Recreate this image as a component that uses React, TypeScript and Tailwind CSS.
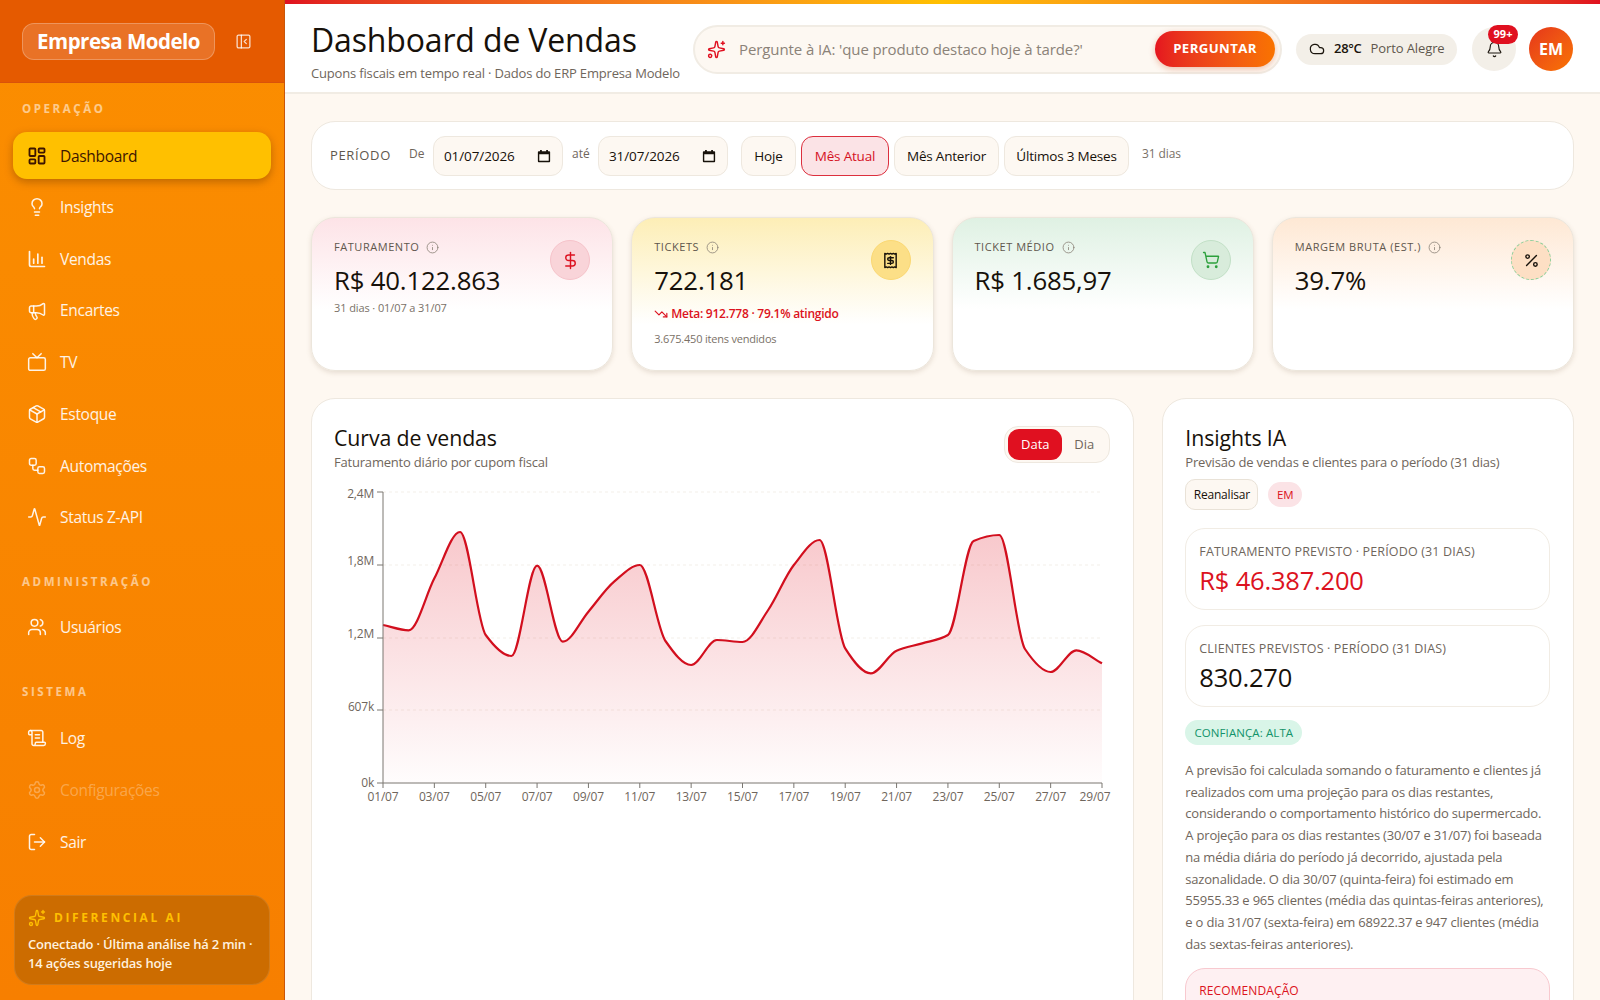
import React from "react";
import {
  LayoutDashboard, Lightbulb, Megaphone, Tv, Package, Workflow, Activity, Users, ScrollText, Settings, LogOut,
  Sparkles, PanelLeftClose, Cloud, Bell, DollarSign, Receipt, ShoppingCart, Percent, Info, TrendingDown,
} from "lucide-react";

const font = { fontFamily: '"Open Sans", "Noto Sans", sans-serif' };

function VendasIcon({ className }: { className?: string }) {
  return (
    <svg viewBox="0 0 24 24" fill="none" stroke="currentColor" strokeWidth="2" strokeLinecap="round" strokeLinejoin="round" className={className}>
      <path d="M3 3v16a2 2 0 0 0 2 2h16" />
      <path d="M8 17v-5" />
      <path d="M13 17V6" />
      <path d="M18 17v-7" />
    </svg>
  );
}

function NavItem({ icon: Icon, label, active, muted }: { icon: any; label: string; active?: boolean; muted?: boolean }) {
  return (
    <div
      className={
        "flex h-[47px] items-center gap-[13px] rounded-[14px] px-[14px] text-[15.5px] tracking-[-0.3px] " +
        (active
          ? "bg-[#ffc000] font-medium text-[#3d1500] shadow-[0_3px_8px_rgba(100,50,0,0.4)]"
          : muted
          ? "font-medium text-white/30"
          : "font-medium text-white/90")
      }
    >
      <Icon className="h-5 w-5 shrink-0" strokeWidth={active ? 2.2 : 1.8} />
      <span className={active ? "pt-[2px]" : "pt-[1px]"}>{label}</span>
    </div>
  );
}

function SectionLabel({ children, className }: { children: React.ReactNode; className?: string }) {
  return (
    <div className={"h-4 pl-[9px] text-[11.5px] leading-4 font-bold tracking-[2.6px] text-white/55 " + (className || "")}>{children}</div>
  );
}

function Sidebar() {
  return (
    <aside className="flex h-full w-[285px] shrink-0 flex-col border-r border-[#c9560a] bg-linear-to-b from-[#fb8e00] to-[#f77f00]">
      <div className="flex h-[83px] shrink-0 items-center border-b border-[#d9530a] bg-[#e55a00] pr-[32px] pl-[22px]">
        <div className="flex h-[37px] w-[193px] items-center justify-center rounded-[12px] border border-white/25 bg-white/15 text-[20.5px] font-bold tracking-[-0.5px] text-white">
          Empresa Modelo
        </div>
        <PanelLeftClose className="ml-auto h-[17px] w-[17px] text-white/80" strokeWidth={1.8} />
      </div>
      <nav className="flex flex-1 flex-col px-[13px] pt-[18px]">
        <SectionLabel className="mb-[15px]">OPERAÇÃO</SectionLabel>
        <div className="flex flex-col gap-[4.7px]">
          <NavItem icon={LayoutDashboard} label="Dashboard" active />
          <NavItem icon={Lightbulb} label="Insights" />
          <NavItem icon={VendasIcon} label="Vendas" />
          <NavItem icon={Megaphone} label="Encartes" />
          <NavItem icon={Tv} label="TV" />
          <NavItem icon={Package} label="Estoque" />
          <NavItem icon={Workflow} label="Automações" />
          <NavItem icon={Activity} label="Status Z-API" />
        </div>
        <SectionLabel className="mt-[33px] mb-[14px]">ADMINISTRAÇÃO</SectionLabel>
        <NavItem icon={Users} label="Usuários" />
        <SectionLabel className="mt-[33px] mb-[15px]">SISTEMA</SectionLabel>
        <div className="flex flex-col gap-[4.7px]">
          <NavItem icon={ScrollText} label="Log" />
          <NavItem icon={Settings} label="Configurações" muted />
          <NavItem icon={LogOut} label="Sair" />
        </div>
      </nav>
      <div className="mx-[14px] mb-[15px] h-[90px] rounded-[18px] border border-white/10 bg-[#cc6c00] px-[13px] pt-[13px]">
        <div className="flex items-center gap-[8px]">
          <Sparkles className="h-[18px] w-[18px] text-[#ffc000]" strokeWidth={1.8} />
          <span className="text-[12px] font-bold tracking-[2.6px] text-[#ffc000]">DIFERENCIAL AI</span>
        </div>
        <p className="mt-[8px] text-[13px] leading-[19px] font-semibold tracking-[-0.2px] text-[#fff1df]">
          Conectado · Última análise há 2 min · 14 ações sugeridas hoje
        </p>
      </div>
    </aside>
  );
}

function Header() {
  return (
    <header className="flex h-[90px] shrink-0 items-center border-b-2 border-[#f1ece4] bg-white pt-[2px] pr-[27px] pl-[26px]">
      <div className="w-[382px] shrink-0 pt-[2px]">
        <h1 className="text-[32px] leading-[40px] font-normal tracking-[-0.15px] text-[#17110a]">Dashboard de Vendas</h1>
        <p className="mt-[5px] text-[13px] leading-[16px] tracking-[-0.17px] whitespace-nowrap text-[#6f665c]">Cupons fiscais em tempo real · Dados do ERP Empresa Modelo</p>
      </div>
      <div className="flex h-[49px] w-[589px] shrink-0 items-center rounded-full border-2 border-[#f1ece4] bg-[#fdf8f2] pr-[5px] pl-[12px]">
        <Sparkles className="h-[19px] w-[19px] text-[#e01020]" strokeWidth={1.8} />
        <span className="ml-[13px] text-[15px] tracking-[-0.1px] text-[#8b8278]">Pergunte à IA: 'que produto destaco hoje à tarde?'</span>
        <div className="ml-auto flex h-[36px] w-[120px] items-center justify-center rounded-full bg-linear-to-r from-[#e5141f] to-[#f97300] text-[13.2px] font-bold tracking-[0.4px] text-white shadow-[0_2px_6px_rgba(200,60,0,0.3)]">
          PERGUNTAR
        </div>
      </div>
      <div className="ml-[14px] flex h-[31px] w-[161px] shrink-0 items-center rounded-full bg-[#f3efe8] pl-[13px]">
        <Cloud className="h-[16px] w-[16px] text-[#1a140c]" strokeWidth={1.8} />
        <span className="ml-[9px] text-[13px] font-semibold tracking-[-0.3px] text-[#1a140c]">28°C</span>
        <span className="ml-[9px] text-[13px] tracking-[-0.1px] text-[#5f574d]">Porto Alegre</span>
      </div>
      <div className="relative ml-[15px] flex h-[44px] w-[44px] shrink-0 items-center justify-center rounded-full bg-[#f3efe8]">
        <Bell className="h-[17px] w-[17px] text-[#1a140c]" strokeWidth={1.6} />
        <span className="absolute -top-[2px] left-[16px] flex h-[19px] w-[30px] items-center justify-center rounded-full bg-[#e01020] text-[11px] font-bold text-white">99+</span>
      </div>
      <div className="ml-[13px] flex h-[44px] w-[44px] shrink-0 items-center justify-center rounded-full bg-linear-to-br from-[#e5341a] to-[#f97300] text-[16px] font-bold text-white">EM</div>
    </header>
  );
}

function CalIcon() {
  return (
    <svg viewBox="0 0 16 16" className="ml-auto h-[14px] w-[14px] text-[#17110a]" fill="currentColor">
      <path d="M3.5 1h2v1.5h5V1h2v1.5H14a1 1 0 0 1 1 1V14a1 1 0 0 1-1 1H2a1 1 0 0 1-1-1V3.5a1 1 0 0 1 1-1h1.5V1zM2.6 6v7.4h10.8V6H2.6z" />
    </svg>
  );
}

function DateBox({ value }: { value: string }) {
  return (
    <div className="flex h-[40px] w-[130px] shrink-0 items-center rounded-[12px] border border-[#eee8df] bg-[#fdf8f2] pr-[11px] pl-[10px] text-[13.5px] tracking-[-0.1px] text-[#17110a]">
      <span className="pt-[1px]">{value}</span>
      <CalIcon />
    </div>
  );
}

function Chip({ children, active, w }: { children: React.ReactNode; active?: boolean; w: string }) {
  return (
    <div
      className={
        "flex h-[40px] shrink-0 items-center justify-center rounded-[12px] border pt-[1px] text-[13.5px] tracking-[-0.2px] " + w + " " +
        (active ? "border-[#dc2f3e] bg-[#fbe3e6] text-[#d5121f]" : "border-[#eee8df] bg-[#fdf8f2] text-[#17110a]")
      }
    >
      {children}
    </div>
  );
}

function FilterBar() {
  return (
    <section className="flex h-[69px] items-center rounded-[24px] border border-[#eee8df] bg-white pl-[18px]">
      <span className="w-[79px] pt-[1px] text-[13px] font-medium tracking-[0.65px] text-[#5f574d]">PERÍODO</span>
      <span className="-mt-[3px] w-[24px] text-[12px] text-[#6f665c]">De</span>
      <DateBox value="01/07/2026" />
      <span className="-mt-[3px] ml-[9px] w-[26px] text-[12px] text-[#6f665c]">até</span>
      <DateBox value="31/07/2026" />
      <div className="ml-[13px] flex gap-[5px]">
        <Chip w="w-[55px]">Hoje</Chip>
        <Chip w="w-[88px]" active>Mês Atual</Chip>
        <Chip w="w-[105px]">Mês Anterior</Chip>
        <Chip w="w-[125px]">Últimos 3 Meses</Chip>
      </div>
      <span className="-mt-[3px] ml-[13px] text-[12px] tracking-[-0.1px] text-[#7a7167]">31 dias</span>
    </section>
  );
}

function Kpi({
  title, value, grad, circle, icon, children,
}: { title: string; value: string; grad: string; circle: string; icon: React.ReactNode; children?: React.ReactNode }) {
  return (
    <div className={"relative h-[154px] rounded-[24px] border border-[#ece6dc] px-[22px] pt-[20px] shadow-[0_2px_5px_rgba(120,100,70,0.18)] " + grad}>
      <div className="flex h-[18px] items-center gap-[7px]">
        <span className="text-[11px] font-medium tracking-[0.55px] text-[#5f574d]">{title}</span>
        <Info className="h-[13px] w-[13px] text-[#8b8278]" strokeWidth={1.5} />
      </div>
      <div className="mt-[7px] text-[25.8px] leading-[34px] tracking-[-0.2px] text-[#17110a]">{value}</div>
      {children}
      <div className={"absolute top-[22px] right-[22px] flex h-[40px] w-[40px] items-center justify-center rounded-full border " + circle}>{icon}</div>
    </div>
  );
}

function Kpis() {
  return (
    <section className="grid grid-cols-4 gap-[18px]">
      <Kpi
        title="FATURAMENTO" value="R$ 40.122.863"
        grad="bg-linear-to-b from-[#fde3e7] to-white to-60%"
        circle="border-[#f6c3ca] bg-[#f9d4d9]"
        icon={<DollarSign className="h-[19px] w-[19px] text-[#dc1220]" strokeWidth={1.8} />}
      >
        <div className="mt-[3px] text-[11px] tracking-[-0.1px] text-[#7a7167]">31 dias · 01/07 a 31/07</div>
      </Kpi>
      <Kpi
        title="TICKETS" value="722.181"
        grad="bg-linear-to-b from-[#fdeeb6] to-white to-70%"
        circle="border-[#fbd872] bg-[#fcdf87]"
        icon={<Receipt className="h-[17px] w-[17px] text-[#17110a]" strokeWidth={2} />}
      >
        <div className="mt-[8px] flex items-center gap-[3px] text-[12px] font-semibold tracking-[-0.25px] text-[#dc1220]">
          <TrendingDown className="h-[14px] w-[14px]" strokeWidth={2} />
          Meta: 912.778 · 79.1% atingido
        </div>
        <div className="mt-[8px] text-[11px] tracking-[-0.2px] text-[#7a7167]">3.675.450 itens vendidos</div>
      </Kpi>
      <Kpi
        title="TICKET MÉDIO" value="R$ 1.685,97"
        grad="bg-linear-to-b from-[#dff1e3] to-white to-60%"
        circle="border-[#c2e0c6] bg-[#d8ecdb]"
        icon={<ShoppingCart className="h-[18px] w-[18px] text-[#2ca03c]" strokeWidth={1.8} />}
      />
      <Kpi
        title="MARGEM BRUTA (EST.)" value="39.7%"
        grad="bg-linear-to-b from-[#fee8d4] to-white to-60%"
        circle="border-[#8fcf9a] border-dashed bg-[#fddfc4]"
        icon={<Percent className="h-[17px] w-[17px] text-[#17110a]" strokeWidth={2} />}
      />
    </section>
  );
}

const zy = [690, 706, 550, 411, 720, 783, 512, 740, 650, 560, 510, 738, 810, 735, 741, 645, 510, 435, 760, 835, 767, 745, 720, 438, 420, 762, 831, 766, 805];
const X0 = 383, X1 = 1102, Y0 = 492, YB = 783, OX = 330, OY = 480;
const step = (X1 - X0) / 28;
const pts = zy.map((v, i) => [X0 + step * i - OX, 395 + v / 3 - OY]);

function monotonePath(p: number[][]) {
  const n = p.length;
  const d: number[] = [];
  for (let i = 0; i < n - 1; i++) d.push((p[i + 1][1] - p[i][1]) / (p[i + 1][0] - p[i][0]));
  const m: number[] = [d[0]];
  for (let i = 1; i < n - 1; i++) m.push(d[i - 1] * d[i] <= 0 ? 0 : (2 * d[i - 1] * d[i]) / (d[i - 1] + d[i]));
  m.push(d[n - 2]);
  let s = `M${p[0][0]},${p[0][1]}`;
  for (let i = 0; i < n - 1; i++) {
    const h = (p[i + 1][0] - p[i][0]) / 3;
    s += ` C${p[i][0] + h},${p[i][1] + m[i] * h} ${p[i + 1][0] - h},${p[i + 1][1] - m[i + 1] * h} ${p[i + 1][0]},${p[i + 1][1]}`;
  }
  return s;
}

function Chart() {
  const line = monotonePath(pts);
  const bottom = YB - OY;
  const left = X0 - OX;
  const right = X1 - OX;
  const top = Y0 - OY;
  const area = `${line} L${right},${bottom} L${left},${bottom} Z`;
  const yTicks: [string, number, number][] = [["2,4M", 492, 6], ["1,8M", 565, 0], ["1,2M", 638, 0], ["607k", 710, 1], ["0k", 783, 4]];
  const xTicks = Array.from({ length: 15 }, (_, i) => i * 2);
  return (
    <svg width="790" height="330" className="mt-[8px] block" style={{ fontFamily: font.fontFamily }}>
      <defs>
        <linearGradient id="areaFill" x1="0" y1="0" x2="0" y2="1">
          <stop offset="0%" stopColor="#e01020" stopOpacity="0.23" />
          <stop offset="100%" stopColor="#e01020" stopOpacity="0.01" />
        </linearGradient>
      </defs>
      {yTicks.slice(0, 4).map(([, y]) => (
        <line key={y} x1={left} x2={right} y1={y - OY} y2={y - OY} stroke="#f3efe9" strokeDasharray="3 3" />
      ))}
      <path d={area} fill="url(#areaFill)" />
      <path d={line} fill="none" stroke="#d20f1e" strokeWidth="2.2" />
      <line x1={left} x2={left} y1={top} y2={bottom} stroke="#7a7671" strokeWidth="1" />
      <line x1={left} x2={right} y1={bottom} y2={bottom} stroke="#7a7671" strokeWidth="1" />
      {yTicks.map(([t, y, dy]) => (
        <g key={t}>
          <line x1={left - 6} x2={left} y1={y - OY} y2={y - OY} stroke="#7a7671" />
          <text x={left - 9} y={y - OY + dy} textAnchor="end" fontSize="12" letterSpacing="-0.2" fill="#6f665c">{t}</text>
        </g>
      ))}
      {xTicks.map((d) => {
        const x = left + step * d;
        return (
          <g key={d}>
            <line x1={x} x2={x} y1={bottom} y2={bottom + 5} stroke="#7a7671" />
            <text x={d === 28 ? x - 7 : x} y={bottom + 18} textAnchor="middle" fontSize="12" letterSpacing="-0.2" fill="#6f665c">
              {String(d + 1).padStart(2, "0")}/07
            </text>
          </g>
        );
      })}
    </svg>
  );
}

function ChartCard() {
  return (
    <div className="h-[700px] rounded-[24px] border border-[#eee8df] bg-white">
      <div className="flex items-start justify-between pt-[25px] pr-[23px] pl-[22px]">
        <div>
          <h2 className="text-[21.3px] leading-[28px] tracking-[-0.1px] text-[#17110a]">Curva de vendas</h2>
          <p className="text-[13px] leading-[20px] tracking-[-0.2px] text-[#6f665c]">Faturamento diário por cupom fiscal</p>
        </div>
        <div className="mt-[2px] flex h-[37px] w-[106px] items-center rounded-[14px] border border-[#eee8df] bg-[#fdf8f2] px-[3px]">
          <div className="flex h-[31px] w-[54px] items-center justify-center rounded-[11px] bg-[#e01020] text-[13px] text-white">Data</div>
          <div className="flex-1 text-center text-[13px] text-[#6f665c]">Dia</div>
        </div>
      </div>
      <div className="pl-[18px]">
        <Chart />
      </div>
    </div>
  );
}

function MetricBox({ label, value, red }: { label: string; value: string; red?: boolean }) {
  return (
    <div className="h-[82px] rounded-[20px] border border-[#f1ece4] bg-white px-[13px] pt-[14px]">
      <div className="text-[12.5px] leading-[18px] tracking-[0.15px] text-[#6f665c]">{label}</div>
      <div className={"mt-[2px] text-[25.5px] leading-[34px] tracking-[-0.2px] " + (red ? "text-[#dc1220]" : "text-[#17110a]")}>{value}</div>
    </div>
  );
}

function InsightsCard() {
  return (
    <div className="h-[700px] rounded-[24px] border border-[#eee8df] bg-white pt-[25px] pr-[23px] pl-[22px]">
      <h2 className="text-[21.3px] leading-[28px] tracking-[-0.1px] text-[#17110a]">Insights IA</h2>
      <p className="text-[13px] leading-[20px] tracking-[-0.18px] text-[#6f665c]">Previsão de vendas e clientes para o período (31 dias)</p>
      <div className="mt-[7px] flex items-center gap-[10px]">
        <div className="flex h-[31px] w-[73px] items-center justify-center rounded-[10px] border border-[#e9e2d7] bg-[#fdf8f2] text-[12px] tracking-[-0.2px] text-[#17110a]">Reanalisar</div>
        <div className="flex h-[25px] w-[34px] items-center justify-center rounded-full bg-[#fbe3e6] text-[11.5px] text-[#dc1220]">EM</div>
      </div>
      <div className="mt-[18px] flex flex-col gap-[15px]">
        <MetricBox label="FATURAMENTO PREVISTO · PERÍODO (31 DIAS)" value="R$ 46.387.200" red />
        <MetricBox label="CLIENTES PREVISTOS · PERÍODO (31 DIAS)" value="830.270" />
      </div>
      <div className="mt-[13px] flex h-[25px] w-[117px] items-center justify-center rounded-full bg-[#d9f5e8] text-[11.5px] font-medium tracking-[0.1px] text-[#12936a]">CONFIANÇA: ALTA</div>
      <p className="mt-[15px] text-[13px] leading-[21.7px] tracking-[-0.2px] text-[#6f665c]">
        A previsão foi calculada somando o faturamento e clientes já realizados com uma projeção para os dias restantes, considerando o comportamento histórico do supermercado. A projeção para os dias restantes (30/07 e 31/07) foi baseada na média diária do período já decorrido, ajustada pela sazonalidade. O dia 30/07 (quinta-feira) foi estimado em 55955.33 e 965 clientes (média das quintas-feiras anteriores), e o dia 31/07 (sexta-feira) em 68922.37 e 947 clientes (média das sextas-feiras anteriores).
      </p>
      <div className="mt-[13px] h-[90px] rounded-[20px] border border-[#f8c9cf] bg-[#fef0f2] px-[13px] pt-[13px] text-[12px] tracking-[0.1px] text-[#dc1220]">RECOMENDAÇÃO</div>
    </div>
  );
}

export default function App() {
  return (
    <div className="flex h-screen w-full overflow-hidden bg-[#fef8f1]" style={font}>
      <Sidebar />
      <main className="flex min-w-0 flex-1 flex-col overflow-hidden">
        <div className="h-[4px] shrink-0 bg-linear-to-r from-[#e01020] via-[#ffc000] to-[#e01020]" />
        <Header />
        <div className="flex flex-col gap-[27px] px-[26px] pt-[27px]">
          <FilterBar />
          <Kpis />
          <section className="grid grid-cols-[2fr_1fr] gap-7">
            <ChartCard />
            <InsightsCard />
          </section>
        </div>
      </main>
    </div>
  );
}
